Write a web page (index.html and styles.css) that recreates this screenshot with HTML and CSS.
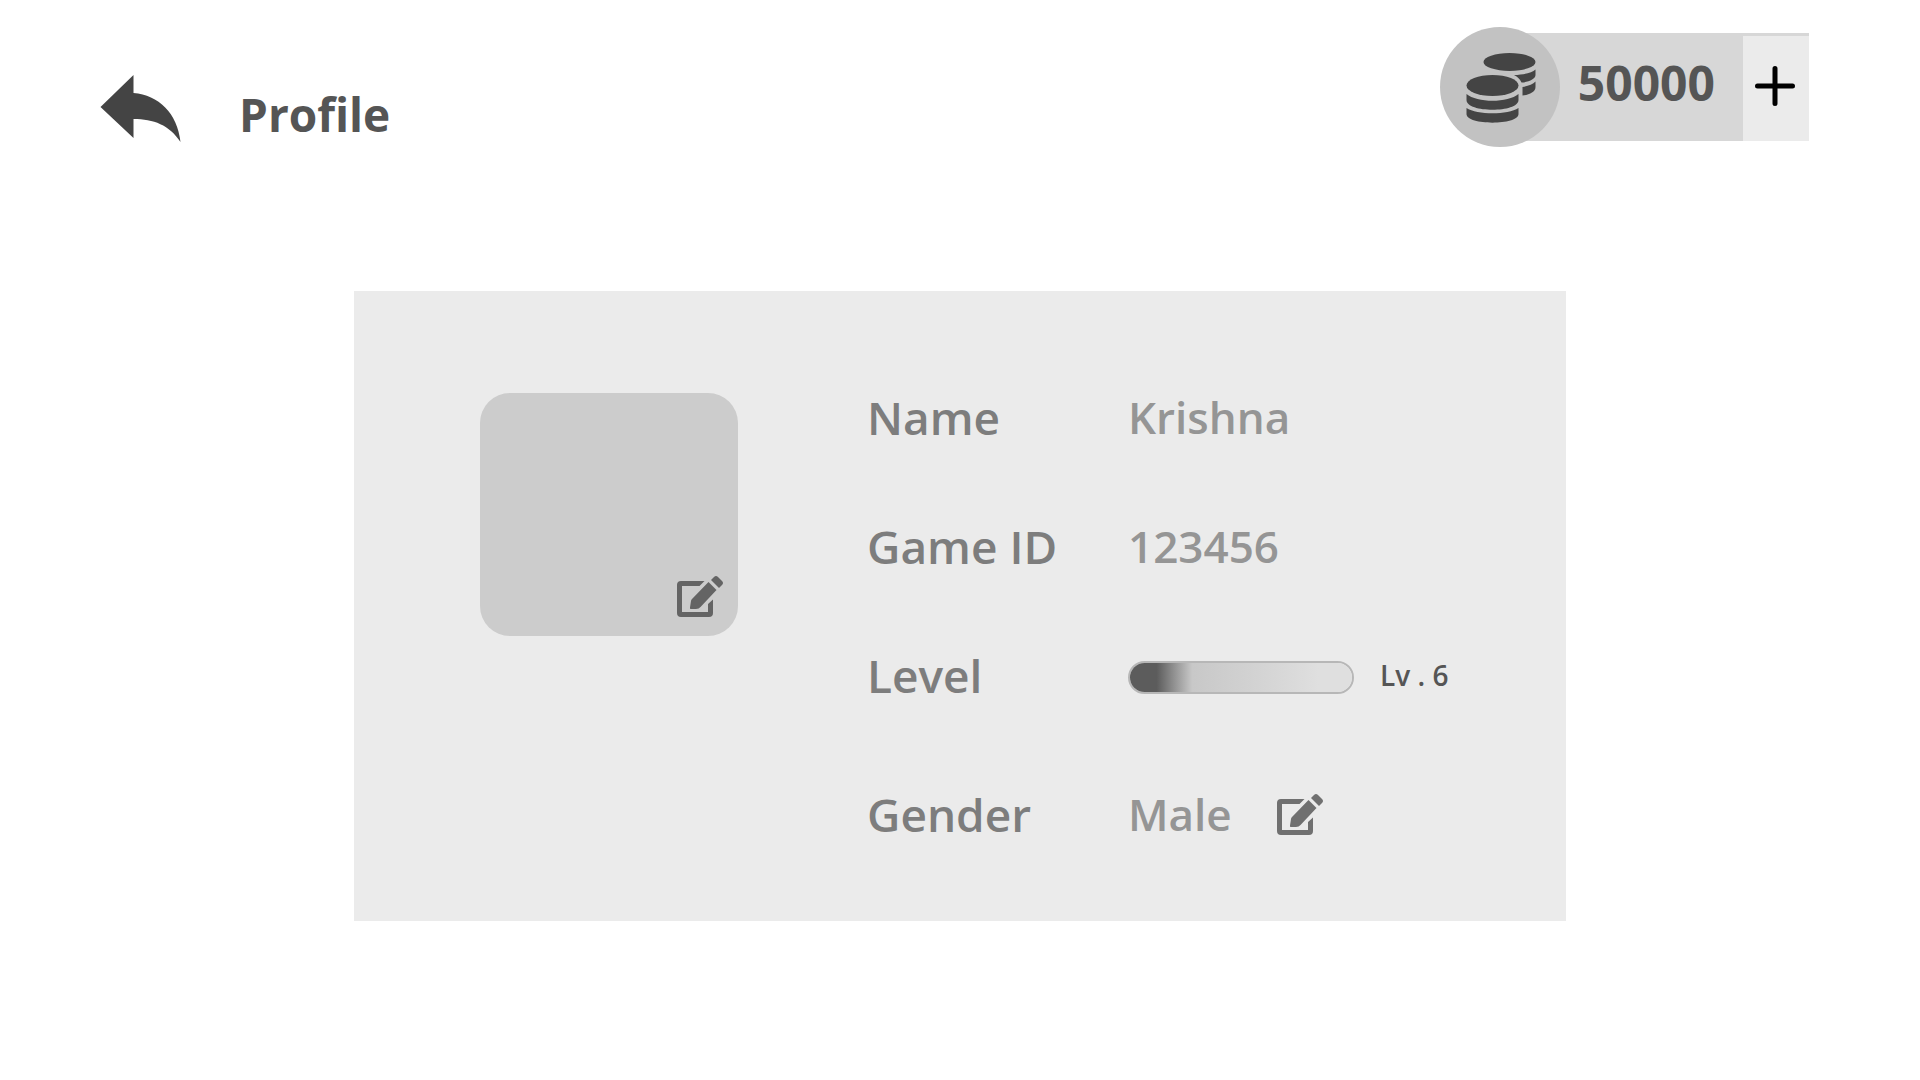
FILE: index.html
```html
<!DOCTYPE html>
<html lang="en">
<head>
<meta charset="utf-8">
<meta name="viewport" content="width=device-width, initial-scale=1">
<title>Profile</title>
<link rel="stylesheet" href="styles.css">
</head>
<body>
<header class="topbar">
  <div class="heading">
    <button class="icon-button" type="button" aria-label="Back">
      <svg class="back-icon" viewBox="0 0 80 67" aria-hidden="true"><path d="M0 32L33 0V18C58 20 77 38 80 67C69 50 53 44 33 44V63Z"/></svg>
    </button>
    <h1 class="title">Profile</h1>
  </div>
  <div class="wallet">
    <div class="coin-badge">
      <svg class="coin-icon" viewBox="0 0 70 70" aria-hidden="true">
        <ellipse cx="43.500" cy="9" rx="26" ry="9"/>
        <path d="M69.500 16.500V22C69.500 26 63 29 55.500 29.500C54 26 51 23.500 48 22C58 21.500 66 20 69.500 16.500Z"/>
        <path d="M69.500 28.500V34C69.500 39 63 42 56.500 42.500V34C62 33 67 31.500 69.500 28.500Z"/>
        <ellipse cx="26.500" cy="32.500" rx="26" ry="10.500"/>
        <path d="M.5 41C11 50 42 50 52.500 41V47C52.500 60 .5 60 .5 47Z"/>
        <path d="M.5 55C11 62 42 62 52.500 55V61C52.500 72.500 .5 72.500 .5 61Z"/>
      </svg>
    </div>
    <span class="balance">50000</span>
    <button class="icon-button add" type="button" aria-label="Add coins">
      <svg class="plus-icon" viewBox="0 0 40 40" aria-hidden="true"><path d="M20 2.500V37.500M2.500 20H37.500"/></svg>
    </button>
  </div>
</header>
<main class="panel">
  <div class="avatar">
    <button class="icon-button" type="button" aria-label="Edit picture">
      <svg class="edit-icon edit-dark" viewBox="0 0 46 41" aria-hidden="true">
        <path d="M27.500 5H4Q0 5 0 9V37Q0 41 4 41H32Q36 41 36 37V23.500L31 28V36H5V10H22.500Z"/>
        <path d="M31.500 6L39.500 14L23.500 31Q22 33 19 33H14Q12.500 33 13 31.500L14 25Q14 24 15 23Z"/>
        <path d="M34 4L37 1Q39 -1 41 1L45 5Q47 7 45 9L42 12Z"/>
      </svg>
    </button>
  </div>
  <dl class="details">
    <div class="row"><dt>Name</dt><dd>Krishna</dd></div>
    <div class="row"><dt>Game ID</dt><dd>123456</dd></div>
    <div class="row">
      <dt id="level">Level</dt>
      <dd class="level"><progress class="meter" value="20" max="100" aria-labelledby="level"></progress><span class="level-text">Lv . 6</span></dd>
    </div>
    <div class="row row-tall">
      <dt>Gender</dt>
      <dd class="gender"><span>Male</span>
        <button class="icon-button" type="button" aria-label="Edit gender">
          <svg class="edit-icon" viewBox="0 0 46 41" aria-hidden="true">
            <path d="M27.500 5H4Q0 5 0 9V37Q0 41 4 41H32Q36 41 36 37V23.500L31 28V36H5V10H22.500Z"/>
            <path d="M31.500 6L39.500 14L23.500 31Q22 33 19 33H14Q12.500 33 13 31.500L14 25Q14 24 15 23Z"/>
            <path d="M34 4L37 1Q39 -1 41 1L45 5Q47 7 45 9L42 12Z"/>
          </svg>
        </button>
      </dd>
    </div>
  </dl>
</main>
</body>
</html>
```
FILE: styles.css
```css
* { box-sizing: border-box; }

body {
  margin: 0;
  background: #fff;
  color: #555;
  font-family: "Open Sans", "Noto Sans", sans-serif;
  font-weight: 600;
}

svg { display: block; }

.icon-button {
  display: block;
  padding: 0;
  border: 0;
  background: none;
  cursor: pointer;
}

.topbar {
  display: flex;
  justify-content: space-between;
  align-items: flex-start;
  padding: 27px 111px 0 100px;
}

.heading {
  display: flex;
  align-items: flex-start;
  gap: 58px;
  padding-top: 48px;
}

.back-icon { width: 81px; height: 67px; fill: #444; }

.title {
  margin: 0;
  padding-top: 9px;
  font-size: 46px;
  font-weight: 700;
  line-height: 60px;
}

.wallet {
  display: flex;
  align-items: center;
  background: linear-gradient(#d7d7d7, #d7d7d7) 60px 6px / calc(100% - 60px) 108px no-repeat;
}

.coin-badge {
  display: grid;
  place-items: center;
  width: 120px;
  height: 120px;
  border-radius: 50%;
  background: #c2c2c2;
}

.coin-icon { width: 70px; height: 70px; margin: 2px 0 0 2px; fill: #444; }

.balance {
  padding: 0 28px 8px 18px;
  font-size: 48px;
  font-weight: 700;
  line-height: 60px;
}

.add {
  display: grid;
  place-items: center;
  align-self: flex-end;
  width: 66px;
  height: 105px;
  margin-bottom: 6px;
  padding: 0 2px 6px 0;
  background: #ebebeb;
}

.plus-icon {
  width: 40px;
  height: 40px;
  fill: none;
  stroke: #000;
  stroke-width: 5;
  stroke-linecap: round;
}

.panel {
  display: flex;
  align-items: flex-start;
  gap: 129px;
  max-width: 1212px;
  margin: 144px auto;
  padding: 96px 99px 67px 126px;
  background: #ebebeb;
}

.avatar {
  display: flex;
  flex: none;
  justify-content: flex-end;
  align-items: flex-end;
  width: 258px;
  height: 243px;
  margin-top: 6px;
  padding: 0 15px 19px;
  border-radius: 30px;
  background: #ccc;
}

.edit-icon { width: 46px; height: 41px; fill: #707070; overflow: visible; }
.edit-dark { fill: #646464; }

.details {
  display: grid;
  flex: 1;
  gap: 69px;
  margin: 0;
}

.row {
  display: grid;
  grid-template-columns: 261px 1fr;
  align-items: center;
  min-height: 60px;
  line-height: 60px;
  white-space: nowrap;
}

.row-tall { min-height: 80px; }

dt { color: #7d7d7d; font-size: 46px; }
dd { margin: 0; color: #959595; font-size: 44px; }

.level { display: flex; align-items: center; gap: 26px; padding-top: 5px; }

.meter {
  width: 226px;
  height: 33px;
  border: 2px solid #b7b7b7;
  border-radius: 17px;
  appearance: none;
  overflow: hidden;
  background: none;
}

.meter::-webkit-progress-bar {
  background: linear-gradient(90deg, #5c5c5c 12%, #c8c8c8 28%, #d2d2d2 55%, #dfdfdf 85%);
}

.meter::-webkit-progress-value { background: transparent; }

.level-text { padding-bottom: 5px; color: #555; font-size: 28px; line-height: 36px; }

.gender { display: flex; align-items: center; gap: 45px; }
```
